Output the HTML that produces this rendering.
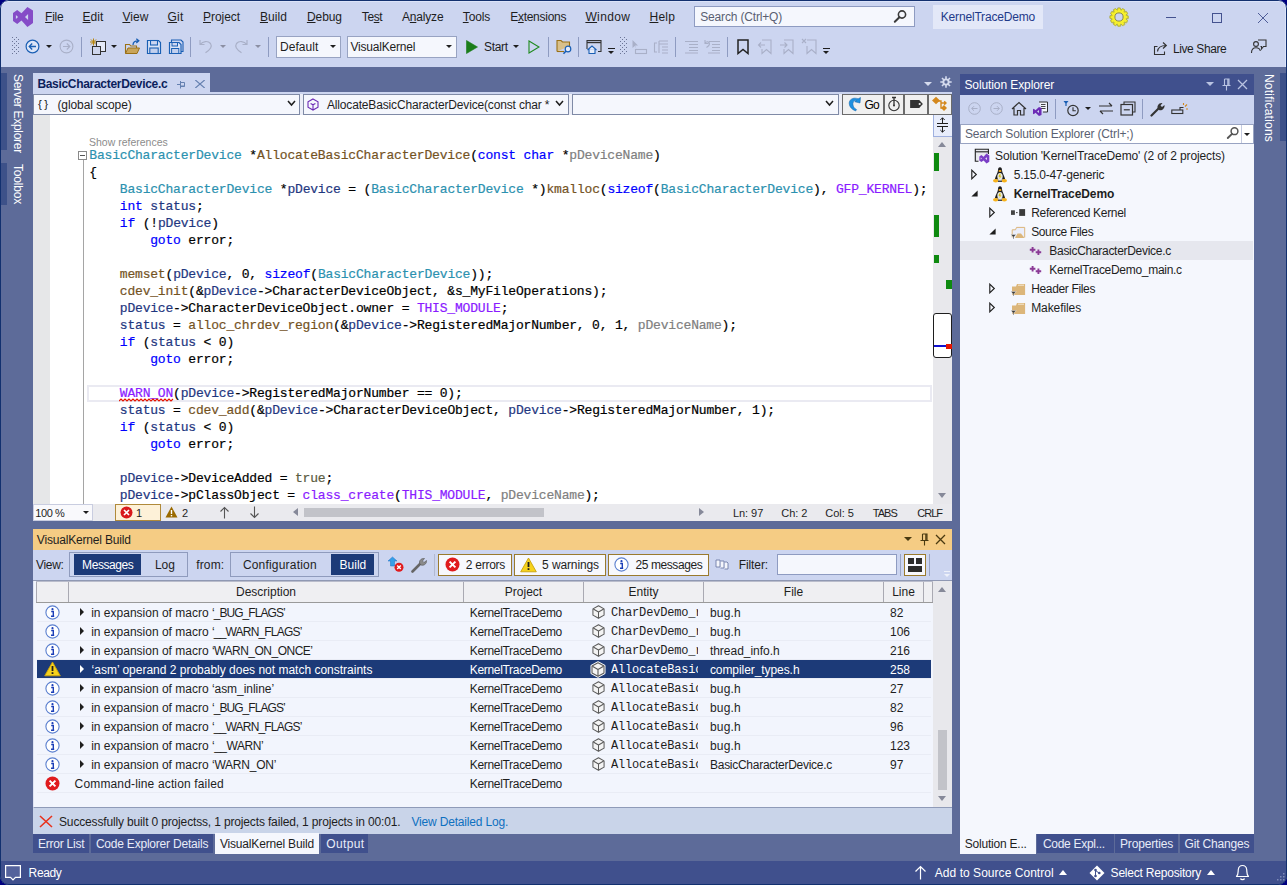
<!DOCTYPE html>
<html>
<head>
<meta charset="utf-8">
<title>KernelTraceDemo</title>
<style>
*{box-sizing:border-box;margin:0;padding:0}
html,body{width:1287px;height:885px;overflow:hidden;background:#000080}
body{font-family:"Liberation Sans",sans-serif;font-size:12px;color:#1e1e1e;position:relative}
.a{position:absolute}
.t{position:absolute;white-space:nowrap;line-height:16px;font-size:12px}
#win{position:absolute;left:0;top:0;width:1287px;height:885px;background:#5d6b99;overflow:hidden;border-radius:9px}
#top{position:absolute;left:0;top:0;width:1287px;height:67px;background:#ccd5f0}
.menu{position:absolute;top:9px;font-size:12px;line-height:16px;color:#1e1e1e;white-space:nowrap}
.menu u{text-decoration:underline;text-underline-offset:1px}
.sep{position:absolute;width:1px;background:#8e9bc1}
.combo{position:absolute;background:#f5f7fd;border:1px solid #98a3c2;font-size:13px;line-height:18px;white-space:nowrap;overflow:hidden}
.arr{position:absolute;width:0;height:0;border-left:3px solid transparent;border-right:3px solid transparent;border-top:3px solid #1e1e1e}
.code{position:absolute;left:89.3px;white-space:pre;font-family:"Liberation Mono",monospace;font-size:13px;letter-spacing:-0.184px;line-height:17px;height:17px;color:#000;-webkit-text-stroke:0.2px currentColor}
.en{color:#5c5c42}.ty{color:#2b91af}.kw{color:#0000ff}.fn{color:#74531f}.mc{color:#8a1bff}.pr{color:#808080}.lv{color:#1f377f}
.row{position:absolute;left:37px;width:894px;height:19px;border-bottom:1px solid #e9ecf5}
.row .t{top:2px;font-size:12px;line-height:17px;color:#1e1e1e}
.row.sel{background:#1c3a78}
.row.sel .t{color:#fff}
.row .mono{font-family:"Liberation Mono",monospace;font-size:12px;letter-spacing:-0.17px}
.se{position:absolute;left:0;width:293px;height:19px}
.se .t{top:2px;line-height:17px}
</style>
</head>
<body>
<div id="win">
<!-- ===== TOP (title + menu + toolbar) ===== -->
<div id="top">
  <!-- VS logo -->
  <svg class="a" style="left:13px;top:7px" width="20" height="20" viewBox="0 0 20 20">
    <path d="M14.4 0 L20 3.6 V16.1 L14.4 20 L8.5 13.6 L4.2 17 L0 14 V5.9 L4.2 3 L8.5 6.3 Z M15.1 7.1 L12 10 L15.1 12.9 Z M2.9 8 L5.1 10 L2.9 12 Z" fill="#854cc7" fill-rule="evenodd"/>
  </svg>
  <div class="menu" style="left:45.1px;letter-spacing:-0.240px"><u>F</u>ile</div>
  <div class="menu" style="left:82.6px;letter-spacing:-0.001px"><u>E</u>dit</div>
  <div class="menu" style="left:122.4px;letter-spacing:0.097px"><u>V</u>iew</div>
  <div class="menu" style="left:167.6px;letter-spacing:0.152px"><u>G</u>it</div>
  <div class="menu" style="left:203.0px;letter-spacing:-0.037px"><u>P</u>roject</div>
  <div class="menu" style="left:259.9px;letter-spacing:0.079px"><u>B</u>uild</div>
  <div class="menu" style="left:306.9px;letter-spacing:-0.055px"><u>D</u>ebug</div>
  <div class="menu" style="left:361.8px;letter-spacing:-0.383px">Te<u>s</u>t</div>
  <div class="menu" style="left:402.0px;letter-spacing:-0.188px">A<u>n</u>alyze</div>
  <div class="menu" style="left:462.8px;letter-spacing:-0.163px"><u>T</u>ools</div>
  <div class="menu" style="left:510.2px;letter-spacing:-0.272px">E<u>x</u>tensions</div>
  <div class="menu" style="left:585.4px;letter-spacing:0.369px"><u>W</u>indow</div>
  <div class="menu" style="left:649.5px;letter-spacing:0.228px"><u>H</u>elp</div>
  <!-- search -->
  <div class="a" style="left:694px;top:6px;width:221px;height:21px;background:#f5f7fd;border:1px solid #8e9bc1"></div>
  <div class="t" style="left:700.2px;top:9px;color:#5a5f72;letter-spacing:-0.164px">Search (Ctrl+Q)</div>
  <svg class="a" style="left:893px;top:9px" width="15" height="15" viewBox="0 0 15 15"><circle cx="9" cy="5.5" r="3.6" fill="none" stroke="#3b3b3b" stroke-width="1.6"/><path d="M6.4 8.2 L1.8 12.8" stroke="#3b3b3b" stroke-width="2" stroke-linecap="round"/></svg>
  <!-- solution name -->
  <div class="a" style="left:933px;top:5px;width:110px;height:24px;background:#e3e8f8"></div>
  <div class="t" style="left:940.8px;top:9px;color:#1f3a8a;letter-spacing:-0.182px">KernelTraceDemo</div>
  <!-- gear / sun icon -->
  <svg class="a" style="left:1109px;top:7px" width="20" height="20" viewBox="0 0 20 20">
    <path d="M19.12 8.81 L19.12 11.19 L16.96 11.85 L16.95 11.88 L18.50 13.53 L17.30 15.59 L15.10 15.08 L15.08 15.10 L15.59 17.30 L13.53 18.50 L11.88 16.95 L11.85 16.96 L11.19 19.12 L8.81 19.12 L8.15 16.96 L8.12 16.95 L6.47 18.50 L4.41 17.30 L4.92 15.10 L4.90 15.08 L2.70 15.59 L1.50 13.53 L3.05 11.88 L3.04 11.85 L0.88 11.19 L0.88 8.81 L3.04 8.15 L3.05 8.12 L1.50 6.47 L2.70 4.41 L4.90 4.92 L4.92 4.90 L4.41 2.70 L6.47 1.50 L8.12 3.05 L8.15 3.04 L8.81 0.88 L11.19 0.88 L11.85 3.04 L11.88 3.05 L13.53 1.50 L15.59 2.70 L15.08 4.90 L15.10 4.92 L17.30 4.41 L18.50 6.47 L16.95 8.12 L16.96 8.15 Z" fill="#f6f02c" stroke="#9a9a4a" stroke-width="0.7" stroke-linejoin="round"/>
    <path d="M19.12 8.81 L19.12 11.19 L16.96 11.85 L16.95 11.88 L18.50 13.53 L17.30 15.59 L15.10 15.08 L15.08 15.10 L15.59 17.30 L13.53 18.50 L11.88 16.95 L11.85 16.96 L11.19 19.12 L8.81 19.12 L8.15 16.96 L8.12 16.95 L6.47 18.50 L4.41 17.30 L4.92 15.10 L4.90 15.08 L2.70 15.59 L1.50 13.53 L3.05 11.88 L3.04 11.85 L0.88 11.19 L0.88 8.81 L3.04 8.15 L3.05 8.12 L1.50 6.47 L2.70 4.41 L4.90 4.92 L4.92 4.90 L4.41 2.70 L6.47 1.50 L8.12 3.05 L8.15 3.04 L8.81 0.88 L11.19 0.88 L11.85 3.04 L11.88 3.05 L13.53 1.50 L15.59 2.70 L15.08 4.90 L15.10 4.92 L17.30 4.41 L18.50 6.47 L16.95 8.12 L16.96 8.15 Z" fill="none" stroke="#c9c41a" stroke-width="0.5" transform="translate(0.4 0.5)"/>
    <circle cx="10" cy="10" r="4.1" fill="#ccd5f0" stroke="#8a8a55" stroke-width="1"/>
  </svg>
  <!-- window buttons -->
  <div class="a" style="left:1166px;top:17px;width:10px;height:1px;background:#44528f"></div>
  <div class="a" style="left:1212px;top:13px;width:10px;height:10px;border:1px solid #44528f"></div>
  <svg class="a" style="left:1258px;top:13px" width="10" height="10" viewBox="0 0 10 10"><path d="M0 0 L10 10 M10 0 L0 10" stroke="#4f5d98" stroke-width="1"/></svg>
</div>
<!-- ===== TOOLBAR ICONS ===== -->
<div id="tb" class="a" style="left:0;top:0;width:1287px;height:67px">
  <!-- grip -->
  <svg class="a" style="left:12px;top:37px" width="7" height="19" viewBox="0 0 7 19"><g fill="#6b7496"><rect x="0" y="0" width="1" height="1"/><rect x="4" y="0" width="1" height="1"/><rect x="2" y="2" width="1" height="1"/><rect x="6" y="2" width="1" height="1"/><rect x="0" y="4" width="1" height="1"/><rect x="4" y="4" width="1" height="1"/><rect x="2" y="6" width="1" height="1"/><rect x="6" y="6" width="1" height="1"/><rect x="0" y="8" width="1" height="1"/><rect x="4" y="8" width="1" height="1"/><rect x="2" y="10" width="1" height="1"/><rect x="6" y="10" width="1" height="1"/><rect x="0" y="12" width="1" height="1"/><rect x="4" y="12" width="1" height="1"/><rect x="2" y="14" width="1" height="1"/><rect x="6" y="14" width="1" height="1"/><rect x="0" y="16" width="1" height="1"/><rect x="4" y="16" width="1" height="1"/></g></svg>
  <!-- back -->
  <svg class="a" style="left:25px;top:39px" width="15" height="15" viewBox="0 0 15 15"><circle cx="7.5" cy="7.5" r="6.4" fill="#dbe4f7" stroke="#1a5fb4" stroke-width="1.2"/><path d="M11 7.5 H4.4 M7.2 4.5 L4.2 7.5 L7.2 10.5" fill="none" stroke="#1a5fb4" stroke-width="1.3"/></svg>
  <div class="arr" style="left:46px;top:45px"></div>
  <!-- forward (disabled) -->
  <svg class="a" style="left:59px;top:39px" width="15" height="15" viewBox="0 0 15 15"><circle cx="7.5" cy="7.5" r="6.4" fill="none" stroke="#a9b0c8" stroke-width="1.1"/><path d="M4 7.5 H10.6 M7.8 4.5 L10.8 7.5 L7.8 10.5" fill="none" stroke="#a9b0c8" stroke-width="1.2"/></svg>
  <div class="sep" style="left:81px;top:37px;height:20px"></div>
  <!-- new project -->
  <svg class="a" style="left:89px;top:38px" width="18" height="17" viewBox="0 0 18 17"><path d="M4.5 0.5 V7.5 M1 4 H8 M2 1.5 L7 6.5 M7 1.5 L2 6.5" stroke="#b8860b" stroke-width="1"/><rect x="7.5" y="3.5" width="9" height="10" fill="#e4e9f7" stroke="#333" stroke-width="1"/><rect x="3.5" y="8.5" width="8" height="8" fill="#cfd6ec" stroke="#333" stroke-width="1"/></svg>
  <div class="arr" style="left:111px;top:45px"></div>
  <!-- open folder -->
  <svg class="a" style="left:124px;top:38px" width="17" height="17" viewBox="0 0 17 17"><path d="M1.5 15.5 V6.5 H5.5 L6.8 8 H12.5 V10" fill="none" stroke="#9a7016" stroke-width="1.1"/><path d="M1.5 15.5 L4 10 H15.5 L13 15.5 Z" fill="#c9a55a" stroke="#9a7016" stroke-width="1"/><path d="M9 7 C9 4 11 2.6 14.5 2.8 M12.3 0.7 L14.8 2.8 L12.3 5" fill="none" stroke="#1a5fb4" stroke-width="1.3"/></svg>
  <!-- save -->
  <svg class="a" style="left:146px;top:39px" width="16" height="16" viewBox="0 0 16 16"><path d="M1.5 1.5 H12.5 L14.5 3.5 V14.5 H1.5 Z" fill="#dbe4f7" stroke="#1a5fb4" stroke-width="1.2"/><rect x="4.5" y="1.5" width="7" height="4.5" fill="#ccd5f0" stroke="#1a5fb4" stroke-width="1.1"/><rect x="3.8" y="9" width="8.4" height="5.5" fill="#c3d0ee" stroke="#1a5fb4" stroke-width="1.1"/></svg>
  <!-- save all -->
  <svg class="a" style="left:168px;top:39px" width="16" height="16" viewBox="0 0 16 16"><path d="M3.5 3 V1 H13 L15 3 V12.5 H13" fill="none" stroke="#1a5fb4" stroke-width="1.1"/><path d="M1.5 3.5 H11 L13 5.5 V14.5 H1.5 Z" fill="#dbe4f7" stroke="#1a5fb4" stroke-width="1.2"/><rect x="4" y="3.5" width="5.5" height="3.5" fill="#ccd5f0" stroke="#1a5fb4" stroke-width="1"/><rect x="3.6" y="9.5" width="7.2" height="5" fill="#c3d0ee" stroke="#1a5fb4" stroke-width="1"/></svg>
  <div class="sep" style="left:190px;top:37px;height:20px"></div>
  <!-- undo / redo disabled -->
  <svg class="a" style="left:199px;top:39px" width="14" height="15" viewBox="0 0 14 15"><path d="M1 1 V5.5 H5.5 M1.2 5.3 C4 2 9 1.5 11.5 4.5 C13.5 7.5 11.5 10.5 6.5 13.8" fill="none" stroke="#a9b0c8" stroke-width="1.2"/></svg>
  <div class="arr" style="left:220px;top:45px;border-top-color:#8b8fa3"></div>
  <svg class="a" style="left:234px;top:39px" width="14" height="15" viewBox="0 0 14 15"><path d="M13 1 V5.5 H8.5 M12.8 5.3 C10 2 5 1.5 2.5 4.5 C0.5 7.5 2.5 10.5 7.5 13.8" fill="none" stroke="#a9b0c8" stroke-width="1.2"/></svg>
  <div class="arr" style="left:255px;top:45px;border-top-color:#8b8fa3"></div>
  <div class="sep" style="left:268px;top:37px;height:20px"></div>
  <!-- combos -->
  <div class="combo" style="left:276px;top:36px;width:65px;height:22px"></div>
  <div class="t" style="left:280.1px;top:39px;letter-spacing:0.024px">Default</div>
  <div class="arr" style="left:330px;top:45px"></div>
  <div class="combo" style="left:347px;top:36px;width:110px;height:22px"></div>
  <div class="t" style="left:350.4px;top:39px;letter-spacing:-0.196px">VisualKernel</div>
  <div class="arr" style="left:446px;top:45px"></div>
  <!-- start -->
  <svg class="a" style="left:466px;top:40px" width="12" height="14" viewBox="0 0 12 14"><path d="M0.5 0.5 L11.5 7 L0.5 13.5 Z" fill="#1a7d1a" stroke="#1a7d1a" stroke-width="0.6"/></svg>
  <div class="t" style="left:484.1px;top:39px;letter-spacing:-0.329px">Start</div>
  <div class="arr" style="left:513px;top:45px"></div>
  <svg class="a" style="left:528px;top:40px" width="12" height="14" viewBox="0 0 12 14"><path d="M1 1 L11 7 L1 13 Z" fill="none" stroke="#1e8a1e" stroke-width="1.1"/></svg>
  <div class="sep" style="left:548px;top:37px;height:20px"></div>
  <!-- folder search -->
  <svg class="a" style="left:556px;top:39px" width="17" height="16" viewBox="0 0 17 16"><path d="M1 12.5 V1.5 H5 L6.5 3 H13.5 V7" fill="#d9c08a" stroke="#9a7016" stroke-width="1.1"/><path d="M1 12.5 H8" stroke="#9a7016" stroke-width="1.1"/><circle cx="12" cy="10" r="2.8" fill="#e6ecfa" stroke="#1a5fb4" stroke-width="1.2"/><path d="M10 12 L7.5 14.8" stroke="#1a5fb4" stroke-width="1.6"/></svg>
  <div class="sep" style="left:578px;top:37px;height:20px"></div>
  <!-- window/home -->
  <svg class="a" style="left:586px;top:39px" width="16" height="16" viewBox="0 0 16 16"><path d="M1 10 V1.5 H15 V12.5 H12" fill="none" stroke="#333" stroke-width="1.1"/><path d="M1 3.5 H15" stroke="#333" stroke-width="1.4"/><path d="M1.5 11 L6 7 L10.5 11 M3 10 V14.5 H9 V10" fill="#e6ecfa" stroke="#1a5fb4" stroke-width="1.1"/></svg>
  <div class="a" style="left:608px;top:48px;width:7px;height:1px;background:#1e1e1e"></div>
  <div class="arr" style="left:608px;top:51px;border-top-width:3.5px"></div>
  <!-- grip 2 -->
  <svg class="a" style="left:620px;top:37px" width="7" height="19" viewBox="0 0 7 19"><g fill="#6b7496"><rect x="0" y="0" width="1" height="1"/><rect x="4" y="0" width="1" height="1"/><rect x="2" y="2" width="1" height="1"/><rect x="6" y="2" width="1" height="1"/><rect x="0" y="4" width="1" height="1"/><rect x="4" y="4" width="1" height="1"/><rect x="2" y="6" width="1" height="1"/><rect x="6" y="6" width="1" height="1"/><rect x="0" y="8" width="1" height="1"/><rect x="4" y="8" width="1" height="1"/><rect x="2" y="10" width="1" height="1"/><rect x="6" y="10" width="1" height="1"/><rect x="0" y="12" width="1" height="1"/><rect x="4" y="12" width="1" height="1"/><rect x="2" y="14" width="1" height="1"/><rect x="6" y="14" width="1" height="1"/><rect x="0" y="16" width="1" height="1"/><rect x="4" y="16" width="1" height="1"/></g></svg>
  <!-- disabled icons -->
  <svg class="a" style="left:631px;top:39px" width="17" height="16" viewBox="0 0 17 16"><path d="M1.5 1 L1.5 9 L3.8 7 L5.5 10 L4 6.5 L7 6.5 Z" fill="#a9b0c8"/><rect x="4.5" y="10.5" width="11" height="4" fill="none" stroke="#a9b0c8" stroke-width="1.1"/></svg>
  <svg class="a" style="left:653px;top:39px" width="16" height="16" viewBox="0 0 16 16"><path d="M4 4 H1.5 V13 H4" fill="none" stroke="#a9b0c8" stroke-width="1.1"/><path d="M6 2 H15 M6 5 H15 M9 8 H15 M9 11 H15 M9 14 H15 M6 2 V14" stroke="#a9b0c8" stroke-width="1.1" fill="none"/></svg>
  <div class="sep" style="left:675px;top:37px;height:20px"></div>
  <svg class="a" style="left:684px;top:40px" width="15" height="14" viewBox="0 0 15 14"><path d="M1 1.5 H14 M5 4.5 H14 M5 7.5 H14 M5 10.5 H14 M1 13 H14" stroke="#a9b0c8" stroke-width="1.1"/></svg>
  <svg class="a" style="left:704px;top:39px" width="17" height="15" viewBox="0 0 17 15"><path d="M5 2.5 H16 M8 5.5 H16 M8 8.5 H16 M8 11.5 H16 M4 14 H16" stroke="#a9b0c8" stroke-width="1.1"/><path d="M1 1 V4.5 H4.5 M1.2 4.3 C2.5 2 5.5 2.5 5.5 5 C5.5 6.5 4 7.5 2.5 8.5" fill="none" stroke="#a9b0c8" stroke-width="1.1"/></svg>
  <div class="sep" style="left:727px;top:37px;height:20px"></div>
  <!-- bookmarks -->
  <svg class="a" style="left:737px;top:39px" width="12" height="16" viewBox="0 0 12 16"><path d="M1 1 H11 V14.5 L6 10.5 L1 14.5 Z" fill="none" stroke="#222" stroke-width="1.5"/></svg>
  <svg class="a" style="left:757px;top:39px" width="15" height="16" viewBox="0 0 15 16"><path d="M5 1 H14 V14.5 L9.5 10.5 L5 14.5 V10" fill="none" stroke="#a9b0c8" stroke-width="1.1"/><path d="M8 6 H1.5 M4 3.5 L1.5 6 L4 8.5" fill="none" stroke="#a9b0c8" stroke-width="1.1"/></svg>
  <svg class="a" style="left:779px;top:39px" width="15" height="16" viewBox="0 0 15 16"><path d="M5 1 H14 V14.5 L9.5 10.5 L5 14.5 V10" fill="none" stroke="#a9b0c8" stroke-width="1.1"/><path d="M1 6 H8 M5.5 3.5 L8 6 L5.5 8.5" fill="none" stroke="#a9b0c8" stroke-width="1.1"/></svg>
  <svg class="a" style="left:801px;top:38px" width="16" height="17" viewBox="0 0 16 17"><path d="M6 2 H15 V15.5 L10.5 11.5 L6 15.5 V8" fill="none" stroke="#a9b0c8" stroke-width="1.1"/><path d="M1 1 L5 5 M5 1 L1 5" stroke="#a9b0c8" stroke-width="1.1"/></svg>
  <div class="a" style="left:823px;top:48px;width:7px;height:1px;background:#1e1e1e"></div>
  <div class="arr" style="left:823px;top:51px;border-top-width:3.5px"></div>
  <!-- live share -->
  <svg class="a" style="left:1153px;top:41px" width="15" height="15" viewBox="0 0 15 15"><path d="M4.5 5.5 H1.5 V13.5 H11.5 V10.5" fill="none" stroke="#333" stroke-width="1.1"/><path d="M4.5 10.5 C5 6.5 8 4.5 13 4.5 M10 1.5 L13.3 4.5 L10 7.5" fill="none" stroke="#333" stroke-width="1.2"/></svg>
  <div class="t" style="left:1173.0px;top:41px;letter-spacing:-0.408px">Live Share</div>
  <svg class="a" style="left:1250px;top:39px" width="17" height="16" viewBox="0 0 17 16"><circle cx="6" cy="5" r="2.4" fill="none" stroke="#333" stroke-width="1.1"/><path d="M1.5 14 C1.5 10 3.5 8.8 6 8.8 C8.5 8.8 10 10 10.3 12" fill="none" stroke="#333" stroke-width="1.1"/><path d="M8 1 H16 V7.5 H13.5 L11.5 10 V7.5 H10.5" fill="#ccd5f0" stroke="#333" stroke-width="1.1"/></svg>
</div>

<!-- TOOLBAR-ICONS-END -->
<!-- ===== LEFT STRIP ===== -->
<div class="a" style="left:1px;top:67px;width:6px;height:794px;background:#5d6b99"></div>
<div class="a" style="left:1px;top:73px;width:6px;height:77px;background:#3d5189"></div>
<div class="a" style="left:1px;top:163px;width:6px;height:42px;background:#3d5189"></div>
<div class="t" style="left:26px;top:73.5px;color:#fff;transform-origin:0 0;transform:rotate(90deg);font-size:12px;line-height:16px;letter-spacing:-0.3px">Server Explorer</div>
<div class="t" style="left:26px;top:164px;color:#fff;transform-origin:0 0;transform:rotate(90deg);font-size:12px;line-height:16px;letter-spacing:-0.2px">Toolbox</div>
<!-- ===== DOCUMENT WELL ===== -->
<div class="a" style="left:33px;top:73px;width:177px;height:21px;background:#ccd5f0"></div>
<div class="a" style="left:33px;top:92px;width:919px;height:2px;background:#ccd5f0"></div>
<div class="t" style="left:37.4px;top:76px;font-weight:bold;color:#0c1f5c;letter-spacing:-0.308px">BasicCharacterDevice.c</div>
<svg class="a" style="left:176px;top:80px" width="10" height="9" viewBox="0 0 10 9"><path d="M1 4.5 H4.5 M4.5 1 V8.5 M4.5 2.5 H8.5 V6.5 H4.5 M4.5 6 H8.5" fill="none" stroke="#6580b0" stroke-width="1"/></svg>
<svg class="a" style="left:195px;top:80px" width="10" height="8" viewBox="0 0 10 8"><path d="M0.3 0 L9.7 8 M9.7 0 L0.3 8" stroke="#6580b0" stroke-width="1.2"/></svg>
<div class="arr" style="left:924px;top:82px;border-top-color:#d5dbee;border-left-width:4px;border-right-width:4px;border-top-width:4.5px"></div>
<svg class="a" style="left:940px;top:76px" width="12" height="12" viewBox="0 0 12 12"><g stroke="#d5dbee" stroke-width="1.6"><path d="M6 0.3 V11.7 M0.3 6 H11.7 M2 2 L10 10 M10 2 L2 10"/></g><circle cx="6" cy="6" r="3.6" fill="#d5dbee"/><circle cx="6" cy="6" r="1.7" fill="#5d6b99"/></svg>
<!-- nav bar -->
<div class="a" style="left:33px;top:94px;width:919px;height:21px;background:#eceef7"></div>
<div class="combo" style="left:33px;top:94px;width:267px;height:21px;border-color:#7f8aa6"></div>
<div class="combo" style="left:303px;top:94px;width:266px;height:21px;border-color:#7f8aa6"></div>
<div class="combo" style="left:572px;top:94px;width:267px;height:21px;border-color:#7f8aa6"></div>
<div class="t" style="left:38px;top:96px;font-size:11.5px;letter-spacing:2.5px;color:#222">{}</div>
<div class="t" style="left:57.4px;top:97px;letter-spacing:-0.077px">(global scope)</div>
<svg class="a" style="left:287px;top:100px" width="9" height="7" viewBox="0 0 9 7"><path d="M1 1 L4.5 5 L8 1" fill="none" stroke="#1e1e1e" stroke-width="1.5"/></svg>
<svg class="a" style="left:307px;top:98px" width="12" height="13" viewBox="0 0 12 13"><path d="M6 1 L11 3.8 V9.2 L6 12 L1 9.2 V3.8 Z M6 12 V6.8 M6 6.8 L3.6 5.4 M6 6.8 L8.4 5.4" fill="none" stroke="#6c2bb5" stroke-width="1.1"/></svg>
<div class="t" style="left:326.9px;top:97px;letter-spacing:-0.153px">AllocateBasicCharacterDevice(const char *</div>
<svg class="a" style="left:555px;top:100px" width="9" height="7" viewBox="0 0 9 7"><path d="M1 1 L4.5 5 L8 1" fill="none" stroke="#1e1e1e" stroke-width="1.5"/></svg>
<svg class="a" style="left:825px;top:100px" width="9" height="7" viewBox="0 0 9 7"><path d="M1 1 L4.5 5 L8 1" fill="none" stroke="#1e1e1e" stroke-width="1.5"/></svg>
<!-- nav buttons -->
<div class="a" style="left:842px;top:94px;width:110px;height:21px;background:#f0f0f0;border:1px solid #6b6b6b"></div>
<div class="a" style="left:883px;top:94px;width:2px;height:21px;background:#6b6b6b"></div>
<div class="a" style="left:903px;top:94px;width:2px;height:21px;background:#6b6b6b"></div>
<div class="a" style="left:927px;top:94px;width:2px;height:21px;background:#6b6b6b"></div>
<svg class="a" style="left:848px;top:96px" width="14" height="16" viewBox="0 0 14 16"><path d="M12.5 1.5 L12 7 L6.8 5.8 L8.6 4.6 C6 4.2 4.4 6.4 5 9 C5.4 11 6.8 12.6 8.6 13.6 L7.6 15 C4 13.6 1.4 11 1.2 7.6 C1 3.6 5 0.8 10.2 2.8 Z" fill="#1e90e0" stroke="#1462a8" stroke-width="0.5"/></svg>
<div class="t" style="left:864.4px;top:97px;color:#000;letter-spacing:-0.608px">Go</div>
<svg class="a" style="left:887px;top:96px" width="14" height="16" viewBox="0 0 14 16"><circle cx="7" cy="9.5" r="5.2" fill="none" stroke="#333" stroke-width="1.1"/><path d="M5 1.5 H9 M7 1.5 V9.5" stroke="#333" stroke-width="1.3"/><circle cx="7" cy="9.5" r="1" fill="#333"/></svg>
<svg class="a" style="left:909px;top:99px" width="15" height="10" viewBox="0 0 16 11"><path d="M1 1 H11 L15 5.5 L11 10 H1 Z" fill="#333"/><circle cx="11.5" cy="5.5" r="1.2" fill="#f0f0f0"/></svg>
<svg class="a" style="left:931px;top:96px" width="18" height="17" viewBox="0 0 18 17"><path d="M5 0.8 L9 4.5 L5 8.2 L1 4.5 Z" fill="#d4881c"/><path d="M13 9 L16 12 L13 15 L10 12 Z" fill="#d4881c"/><path d="M6 5 H10 V12 H13 M10 7 H15 M13.2 5.2 L15 7 L13.2 8.8" fill="none" stroke="#d4881c" stroke-width="1.4"/></svg>
<!-- ===== EDITOR ===== -->
<div id="ed" class="a" style="left:33px;top:115px;width:919px;height:389px;background:#fff;overflow:hidden">
  <div class="a" style="left:0;top:0;width:17px;height:389px;background:#e6e7e8"></div>
</div>
<!-- outlining -->
<div class="a" style="left:78px;top:151px;width:9px;height:9px;border:1px solid #8a8a8a;background:#fff"></div>
<div class="a" style="left:80px;top:155px;width:5px;height:1px;background:#555"></div>
<div class="a" style="left:83px;top:160px;width:1px;height:344px;background:#a5a5a5"></div>
<div class="t" style="left:89px;top:136px;font-size:10.5px;line-height:13px;color:#8c8c8c">Show references</div>
<!-- current line -->
<div class="a" style="left:87px;top:385px;width:845px;height:17px;border:2px solid #eaeaf2;background:#fff"></div>
<div class="code" style="top:147px"><span class="ty">BasicCharacterDevice</span> *<span class="fn">AllocateBasicCharacterDevice</span>(<span class="kw">const</span> <span class="kw">char</span> *<span class="pr">pDeviceName</span>)</div>
<div class="code" style="top:164px">{</div>
<div class="code" style="top:181px">    <span class="ty">BasicCharacterDevice</span> *<span class="lv">pDevice</span> = (<span class="ty">BasicCharacterDevice</span> *)<span class="fn">kmalloc</span>(<span class="kw">sizeof</span>(<span class="ty">BasicCharacterDevice</span>), <span class="mc">GFP_KERNEL</span>);</div>
<div class="code" style="top:198px">    <span class="kw">int</span> <span class="lv">status</span>;</div>
<div class="code" style="top:215px">    <span class="kw">if</span> (!<span class="lv">pDevice</span>)</div>
<div class="code" style="top:232px">        <span class="kw">goto</span> error;</div>
<div class="code" style="top:266px">    <span class="fn">memset</span>(<span class="lv">pDevice</span>, 0, <span class="kw">sizeof</span>(<span class="ty">BasicCharacterDevice</span>));</div>
<div class="code" style="top:283px">    <span class="fn">cdev_init</span>(&amp;<span class="lv">pDevice</span>-&gt;CharacterDeviceObject, &amp;s_MyFileOperations);</div>
<div class="code" style="top:300px">    <span class="lv">pDevice</span>-&gt;CharacterDeviceObject.owner = <span class="mc">THIS_MODULE</span>;</div>
<div class="code" style="top:317px">    <span class="lv">status</span> = <span class="fn">alloc_chrdev_region</span>(&amp;<span class="lv">pDevice</span>-&gt;RegisteredMajorNumber, 0, 1, <span class="pr">pDeviceName</span>);</div>
<div class="code" style="top:334px">    <span class="kw">if</span> (<span class="lv">status</span> &lt; 0)</div>
<div class="code" style="top:351px">        <span class="kw">goto</span> error;</div>
<div class="code" style="top:385px">    <span class="mc sq">WARN_ON</span>(<span class="lv">pDevice</span>-&gt;RegisteredMajorNumber == 0);</div>
<div class="code" style="top:402px">    <span class="lv">status</span> = <span class="fn">cdev_add</span>(&amp;<span class="lv">pDevice</span>-&gt;CharacterDeviceObject, <span class="lv">pDevice</span>-&gt;RegisteredMajorNumber, 1);</div>
<div class="code" style="top:419px">    <span class="kw">if</span> (<span class="lv">status</span> &lt; 0)</div>
<div class="code" style="top:436px">        <span class="kw">goto</span> error;</div>
<div class="code" style="top:470px">    <span class="lv">pDevice</span>-&gt;DeviceAdded = <span class="en">true</span>;</div>
<div class="code" style="top:487px">    <span class="lv">pDevice</span>-&gt;pClassObject = <span class="mc">class_create</span>(<span class="mc">THIS_MODULE</span>, <span class="pr">pDeviceName</span>);</div>

<!-- squiggle -->
<svg class="a" style="left:119px;top:398px" width="55" height="4" viewBox="0 0 55 4"><path d="M0 3 L2 1 L4 3 L6 1 L8 3 L10 1 L12 3 L14 1 L16 3 L18 1 L20 3 L22 1 L24 3 L26 1 L28 3 L30 1 L32 3 L34 1 L36 3 L38 1 L40 3 L42 1 L44 3 L46 1 L48 3 L50 1 L52 3 L54 1" fill="none" stroke="#e51400" stroke-width="1.1"/></svg>
<!-- vertical scrollbar -->
<div class="a" style="left:933px;top:115px;width:19px;height:389px;background:#e8e8ec"></div>
<div class="a" style="left:933px;top:115px;width:19px;height:22px;background:#e8edfb;border-left:1px solid #9fb0df;border-bottom:1px solid #9fb0df"></div>
<svg class="a" style="left:936px;top:117px" width="13" height="16" viewBox="0 0 13 16"><path d="M1 6.5 H12 M1 9.5 H12 M6.5 0.8 V6 M6.5 10 V15.2 M4.3 3 L6.5 0.8 L8.7 3 M4.3 13 L6.5 15.2 L8.7 13" fill="none" stroke="#1e1e1e" stroke-width="1"/></svg>
<div class="a" style="left:938px;top:142px;width:0;height:0;border-left:4.5px solid transparent;border-right:4.5px solid transparent;border-bottom:5px solid #868999"></div>
<div class="a" style="left:938px;top:493px;width:0;height:0;border-left:4.5px solid transparent;border-right:4.5px solid transparent;border-top:5px solid #868999"></div>
<div class="a" style="left:934px;top:153px;width:5px;height:18px;background:#0f8a10"></div>
<div class="a" style="left:934px;top:215px;width:5px;height:22px;background:#0f8a10"></div>
<div class="a" style="left:934px;top:255px;width:5px;height:8px;background:#0f8a10"></div>
<div class="a" style="left:946px;top:280px;width:6px;height:9px;background:#0f8a10"></div>
<div class="a" style="left:933px;top:313px;width:19px;height:45px;background:#fff;border:1px solid #1e1e1e;border-radius:3px"></div>
<div class="a" style="left:934px;top:345px;width:17px;height:2px;background:#1010d0"></div>
<div class="a" style="left:946px;top:344px;width:6px;height:5px;background:#e51400"></div>
<!-- editor bottom status row -->
<div class="a" style="left:33px;top:504px;width:919px;height:17px;background:#eaeaee"></div>
<div class="a" style="left:33px;top:504px;width:60px;height:17px;background:#f9f9fc;border:1px solid #c9cde0"></div>
<div class="t" style="left:35.3px;top:506px;line-height:15px;font-size:11px;letter-spacing:-0.401px">100 %</div>
<div class="arr" style="left:83px;top:511px"></div>
<div class="a" style="left:115px;top:504px;width:46px;height:17px;background:#fdf1d8;border:1px solid #b08a3a"></div>
<svg class="a" style="left:120px;top:506px" width="13" height="13" viewBox="0 0 13 13"><circle cx="6.5" cy="6.5" r="6" fill="#d8191c"/><path d="M4 4 L9 9 M9 4 L4 9" stroke="#fff" stroke-width="1.7"/></svg>
<div class="t" style="left:136px;top:506px;line-height:15px;font-size:11px">1</div>
<svg class="a" style="left:165px;top:506px" width="13" height="12" viewBox="0 0 13 12"><path d="M6.5 0.5 L12.5 11.5 H0.5 Z" fill="#9a6a00"/><path d="M6.5 4 V8" stroke="#fff" stroke-width="1.4"/><rect x="5.8" y="9" width="1.4" height="1.4" fill="#fff"/></svg>
<div class="t" style="left:182px;top:506px;line-height:15px;font-size:11px">2</div>
<svg class="a" style="left:219px;top:506px" width="11" height="13" viewBox="0 0 11 13"><path d="M5.5 12.5 V1.5 M1.5 5.5 L5.5 1.5 L9.5 5.5" fill="none" stroke="#555" stroke-width="1.1"/></svg>
<svg class="a" style="left:249px;top:506px" width="11" height="13" viewBox="0 0 11 13"><path d="M5.5 0.5 V11.5 M1.5 7.5 L5.5 11.5 L9.5 7.5" fill="none" stroke="#555" stroke-width="1.1"/></svg>
<div class="a" style="left:293px;top:508px;width:0;height:0;border-top:4.5px solid transparent;border-bottom:4.5px solid transparent;border-right:5px solid #868999"></div>
<div class="a" style="left:304px;top:508px;width:240px;height:9px;background:#c2c3c9"></div>
<div class="a" style="left:699px;top:508px;width:0;height:0;border-top:4.5px solid transparent;border-bottom:4.5px solid transparent;border-left:5px solid #868999"></div>
<div class="t" style="left:733.0px;top:506px;line-height:15px;font-size:11px;letter-spacing:-0.066px">Ln: 97</div>
<div class="t" style="left:781.3px;top:506px;line-height:15px;font-size:11px;letter-spacing:-0.079px">Ch: 2</div>
<div class="t" style="left:825.3px;top:506px;line-height:15px;font-size:11px;letter-spacing:-0.008px">Col: 5</div>
<div class="t" style="left:872.7px;top:506px;line-height:15px;font-size:11px;letter-spacing:-0.905px">TABS</div>
<div class="t" style="left:917.2px;top:506px;line-height:15px;font-size:11px;letter-spacing:-0.959px">CRLF</div>
<!-- EDITOR-CONTENT-END -->

<!-- DOC-END -->
<!-- ===== BUILD PANEL ===== -->
<div class="a" style="left:33px;top:529px;width:919px;height:21px;background:#f5cc84"></div>
<div class="t" style="left:36.8px;top:532px;color:#1e1e1e;letter-spacing:-0.182px">VisualKernel Build</div>
<div class="arr" style="left:904px;top:537px;border-left-width:4px;border-right-width:4px;border-top-width:4.5px;border-top-color:#4a3a10"></div>
<svg class="a" style="left:919px;top:533px" width="11" height="13" viewBox="0 0 11 13"><path d="M3.5 1 H8 V7 M3.5 1 V7 M6.8 1 V7 M1.5 7.5 H9.5 M5.5 7.5 V12.5" fill="none" stroke="#4a3a10" stroke-width="1.1"/></svg>
<svg class="a" style="left:935px;top:534px" width="11" height="11" viewBox="0 0 11 11"><path d="M1 1 L10 10 M10 1 L1 10" stroke="#4a3a10" stroke-width="1.3"/></svg>
<div class="a" style="left:33px;top:550px;width:919px;height:31px;background:#ccd5f0"></div>
<div class="t" style="left:36.0px;top:557px;letter-spacing:-0.308px">View:</div>
<div class="a" style="left:69px;top:552px;width:119px;height:25px;border:1px solid #8f9bbd;background:#ccd5f0"></div>
<div class="a" style="left:74px;top:554px;width:67px;height:21px;background:#1c3a78"></div>
<div class="t" style="left:82.1px;top:557px;color:#fff;letter-spacing:-0.438px">Messages</div>
<div class="t" style="left:155.1px;top:557px;letter-spacing:-0.144px">Log</div>
<div class="t" style="left:196.2px;top:557px;letter-spacing:0.171px">from:</div>
<div class="a" style="left:230px;top:552px;width:149px;height:25px;border:1px solid #8f9bbd;background:#ccd5f0"></div>
<div class="a" style="left:331px;top:554px;width:43px;height:21px;background:#1c3a78"></div>
<div class="t" style="left:242.9px;top:557px;letter-spacing:0.193px">Configuration</div>
<div class="t" style="left:339.5px;top:557px;color:#fff;letter-spacing:0.023px">Build</div>
<!-- small icons -->
<svg class="a" style="left:387px;top:556px" width="17" height="17" viewBox="0 0 17 17"><path d="M5.5 1 L10 5 H7.5 V10 H3.5 V5 H1 Z" fill="#359fe8" stroke="#1a6fc4" stroke-width="0.5"/><circle cx="12" cy="11.2" r="4.5" fill="#e01b1e"/><path d="M10.2 9.4 L13.8 13 M13.8 9.4 L10.2 13" stroke="#fff" stroke-width="1.4"/></svg>
<svg class="a" style="left:411px;top:556px" width="18" height="17" viewBox="0 0 18 17"><path d="M1.5 15.5 L9.5 7.5" stroke="#666" stroke-width="2.6" stroke-linecap="round"/><path d="M9 8 C7.5 5.5 9.5 2 13.5 2.5 L11.5 5 L13 6.5 L15.5 4.5 C16 8 12.5 10 10 9 Z" fill="#8a8a8a" stroke="#555" stroke-width="0.6"/></svg>
<div class="sep" style="left:434px;top:554px;height:22px;background:#b3bad0"></div>
<!-- counters -->
<div class="a" style="left:438px;top:554px;width:74px;height:22px;background:#f7f8fd;border:1px solid #9a7a2e"></div>
<svg class="a" style="left:445px;top:557px" width="15" height="15" viewBox="0 0 15 15"><circle cx="7.5" cy="7.5" r="7" fill="#e01b1e"/><path d="M4.6 4.6 L10.4 10.4 M10.4 4.6 L4.6 10.4" stroke="#fff" stroke-width="2"/></svg>
<div class="t" style="left:465.8px;top:557px;letter-spacing:-0.255px">2 errors</div>
<div class="a" style="left:514px;top:554px;width:92px;height:22px;background:#f7f8fd;border:1px solid #9a7a2e"></div>
<svg class="a" style="left:520px;top:557px" width="17" height="16" viewBox="0 0 17 16"><path d="M8.5 1 L16.3 14.8 H0.7 Z" fill="#f6d21c" stroke="#c9a30a" stroke-width="0.9" stroke-linejoin="round"/><path d="M8.5 5 V10" stroke="#1e1e1e" stroke-width="1.8"/><rect x="7.6" y="11.2" width="1.8" height="1.8" fill="#1e1e1e"/></svg>
<div class="t" style="left:542.1px;top:557px;letter-spacing:-0.113px">5 warnings</div>
<div class="a" style="left:608px;top:554px;width:101px;height:22px;background:#f7f8fd;border:1px solid #9a7a2e"></div>
<svg class="a" style="left:614px;top:557px" width="15" height="15" viewBox="0 0 15 15"><circle cx="7.5" cy="7.5" r="6.6" fill="#fff" stroke="#5a7fcf" stroke-width="1.1"/><circle cx="7.5" cy="4.2" r="1.1" fill="#1c3fb8"/><path d="M6.2 6.5 H8.3 V11.6 M6 11.3 H9.2" fill="none" stroke="#1c3fb8" stroke-width="1.4"/></svg>
<div class="t" style="left:635.6px;top:557px;letter-spacing:-0.434px">25 messages</div>
<svg class="a" style="left:715px;top:559px" width="14" height="11" viewBox="0 0 14 11"><path d="M1 1 H5 V8 H1 Z M5.5 2 H9 V9 H5.5 M9.5 3 H12 L13 4 V10 H9.5" fill="#f4f6fc" stroke="#6f7da8" stroke-width="0.9"/></svg>
<div class="t" style="left:738.8px;top:557px;letter-spacing:-0.114px">Filter:</div>
<div class="a" style="left:777px;top:554px;width:120px;height:21px;background:#f5f7fd;border:1px solid #8e9bc1"></div>
<div class="sep" style="left:900px;top:554px;height:22px;background:#9aa5c6"></div>
<div class="a" style="left:904px;top:554px;width:22px;height:22px;background:#f7f8fd;border:1px solid #9a7a2e"></div>
<div class="a" style="left:908px;top:558px;width:6px;height:6px;background:#2b2b2b"></div>
<div class="a" style="left:916px;top:558px;width:6px;height:6px;background:#2b2b2b"></div>
<div class="a" style="left:908px;top:566px;width:14px;height:6px;background:#2b2b2b"></div>
<div class="sep" style="left:929px;top:554px;height:22px;background:#9aa5c6"></div>
<div class="a" style="left:944px;top:571px;width:6px;height:1px;background:#eef1fa"></div>
<div class="arr" style="left:944px;top:574px;border-top-width:3.5px;border-top-color:#eef1fa"></div>
<!-- table body -->
<div class="a" style="left:33px;top:581px;width:919px;height:227px;background:#f2f5fd;border-left:1px solid #dfe4f3;border-bottom:1px solid #8f9bb8"></div>
<!-- header -->
<div class="a" style="left:33px;top:580px;width:919px;height:1px;background:#8f98b3"></div><div class="a" style="left:36px;top:581px;width:897px;height:22px;background:#efeff2;border-bottom:1px solid #9a9a9a;border-top:1px solid #b9bccb"></div>
<div class="a" style="left:36px;top:582px;width:1px;height:20px;background:#a9a9b2"></div>
<div class="a" style="left:68px;top:582px;width:1px;height:20px;background:#a9a9b2"></div>
<div class="a" style="left:463px;top:582px;width:1px;height:20px;background:#a9a9b2"></div>
<div class="a" style="left:583px;top:582px;width:1px;height:20px;background:#a9a9b2"></div>
<div class="a" style="left:703px;top:582px;width:1px;height:20px;background:#a9a9b2"></div>
<div class="a" style="left:883px;top:582px;width:1px;height:20px;background:#a9a9b2"></div>
<div class="a" style="left:923px;top:582px;width:1px;height:20px;background:#a9a9b2"></div>
<div class="a" style="left:932px;top:582px;width:1px;height:20px;background:#a9a9b2"></div>
<div class="t" style="left:69px;top:584px;width:394px;text-align:center">Description</div>
<div class="t" style="left:464px;top:584px;width:119px;text-align:center">Project</div>
<div class="t" style="left:584px;top:584px;width:119px;text-align:center">Entity</div>
<div class="t" style="left:704px;top:584px;width:179px;text-align:center">File</div>
<div class="t" style="left:884px;top:584px;width:39px;text-align:center">Line</div>
<div class="row" style="top:603px"><svg class="a" style="left:8px;top:2px" width="15" height="15" viewBox="0 0 15 15"><circle cx="7.5" cy="7.5" r="6.6" fill="#fff" stroke="#5a7fcf" stroke-width="1.1"/><circle cx="7.5" cy="4.2" r="1.1" fill="#1c3fb8"/><path d="M6.2 6.5 H8.3 V11.6 M6 11.3 H9.2" fill="none" stroke="#1c3fb8" stroke-width="1.4"/></svg><div class="a" style="left:43px;top:5px;width:0;height:0;border-top:4px solid transparent;border-bottom:4px solid transparent;border-left:4.5px solid #1e1e1e"></div><div class="t" style="left:54.2px">in expansion of macro <span style="letter-spacing:-0.94px">‘_BUG_FLAGS’</span></div><div class="t" style="left:432.7px;letter-spacing:-0.309px">KernelTraceDemo</div><svg class="a" style="left:554.5px;top:2px" width="13" height="14" viewBox="0 0 14 15"><path d="M7 0.8 L13 4.1 V10.9 L7 14.2 L1 10.9 V4.1 Z" fill="#f4f4f4" stroke="#5a5a5a" stroke-width="1.1" stroke-linejoin="round"/><path d="M7 14.2 V7.5 M7 7.5 L1.4 4.3 M7 7.5 L12.6 4.3" fill="none" stroke="#5a5a5a" stroke-width="1.1"/></svg><div class="t mono" style="left:574px;width:87px;overflow:hidden">CharDevDemo_read</div><div class="t" style="left:672.9px;letter-spacing:0.194px">bug.h</div><div class="t" style="left:853px">82</div></div>
<div class="row" style="top:622px"><svg class="a" style="left:8px;top:2px" width="15" height="15" viewBox="0 0 15 15"><circle cx="7.5" cy="7.5" r="6.6" fill="#fff" stroke="#5a7fcf" stroke-width="1.1"/><circle cx="7.5" cy="4.2" r="1.1" fill="#1c3fb8"/><path d="M6.2 6.5 H8.3 V11.6 M6 11.3 H9.2" fill="none" stroke="#1c3fb8" stroke-width="1.4"/></svg><div class="a" style="left:43px;top:5px;width:0;height:0;border-top:4px solid transparent;border-bottom:4px solid transparent;border-left:4.5px solid #1e1e1e"></div><div class="t" style="left:54.2px">in expansion of macro <span style="letter-spacing:-0.81px">‘__WARN_FLAGS’</span></div><div class="t" style="left:432.7px;letter-spacing:-0.309px">KernelTraceDemo</div><svg class="a" style="left:554.5px;top:2px" width="13" height="14" viewBox="0 0 14 15"><path d="M7 0.8 L13 4.1 V10.9 L7 14.2 L1 10.9 V4.1 Z" fill="#f4f4f4" stroke="#5a5a5a" stroke-width="1.1" stroke-linejoin="round"/><path d="M7 14.2 V7.5 M7 7.5 L1.4 4.3 M7 7.5 L12.6 4.3" fill="none" stroke="#5a5a5a" stroke-width="1.1"/></svg><div class="t mono" style="left:574px;width:87px;overflow:hidden">CharDevDemo_read</div><div class="t" style="left:672.9px;letter-spacing:0.194px">bug.h</div><div class="t" style="left:853px">106</div></div>
<div class="row" style="top:641px"><svg class="a" style="left:8px;top:2px" width="15" height="15" viewBox="0 0 15 15"><circle cx="7.5" cy="7.5" r="6.6" fill="#fff" stroke="#5a7fcf" stroke-width="1.1"/><circle cx="7.5" cy="4.2" r="1.1" fill="#1c3fb8"/><path d="M6.2 6.5 H8.3 V11.6 M6 11.3 H9.2" fill="none" stroke="#1c3fb8" stroke-width="1.4"/></svg><div class="a" style="left:43px;top:5px;width:0;height:0;border-top:4px solid transparent;border-bottom:4px solid transparent;border-left:4.5px solid #1e1e1e"></div><div class="t" style="left:54.2px">in expansion of macro <span style="letter-spacing:-0.5px">‘WARN_ON_ONCE’</span></div><div class="t" style="left:432.7px;letter-spacing:-0.309px">KernelTraceDemo</div><svg class="a" style="left:554.5px;top:2px" width="13" height="14" viewBox="0 0 14 15"><path d="M7 0.8 L13 4.1 V10.9 L7 14.2 L1 10.9 V4.1 Z" fill="#f4f4f4" stroke="#5a5a5a" stroke-width="1.1" stroke-linejoin="round"/><path d="M7 14.2 V7.5 M7 7.5 L1.4 4.3 M7 7.5 L12.6 4.3" fill="none" stroke="#5a5a5a" stroke-width="1.1"/></svg><div class="t mono" style="left:574px;width:87px;overflow:hidden">CharDevDemo_read</div><div class="t" style="left:672.9px;letter-spacing:-0.020px">thread_info.h</div><div class="t" style="left:853px">216</div></div>
<div class="row sel" style="top:660px"><svg class="a" style="left:7px;top:1px" width="17" height="16" viewBox="0 0 17 16"><path d="M8.5 1 L16.3 14.8 H0.7 Z" fill="#f6d21c" stroke="#c9a30a" stroke-width="0.9" stroke-linejoin="round"/><path d="M8.5 5 V10" stroke="#1e1e1e" stroke-width="1.8"/><rect x="7.6" y="11.2" width="1.8" height="1.8" fill="#1e1e1e"/></svg><div class="a" style="left:43px;top:5px;width:0;height:0;border-top:4px solid transparent;border-bottom:4px solid transparent;border-left:4.5px solid #fff"></div><div class="t" style="left:54.6px;letter-spacing:-0.005px">‘asm’ operand 2 probably does not match constraints</div><div class="t" style="left:432.7px;letter-spacing:-0.309px">KernelTraceDemo</div><svg class="a" style="left:553px;top:1px" width="16" height="17" viewBox="-1 -1 16 17"><path d="M7 0.8 L13 4.1 V10.9 L7 14.2 L1 10.9 V4.1 Z" fill="#fff" stroke="#fff" stroke-width="3" stroke-linejoin="round"/><path d="M7 0.8 L13 4.1 V10.9 L7 14.2 L1 10.9 V4.1 Z" fill="#f4f4f4" stroke="#5a5a5a" stroke-width="1.1" stroke-linejoin="round"/><path d="M7 14.2 V7.5 M7 7.5 L1.4 4.3 M7 7.5 L12.6 4.3" fill="none" stroke="#5a5a5a" stroke-width="1.1"/></svg><div class="t mono" style="left:574px;width:87px;overflow:hidden">AllocateBasicCharacterDevice</div><div class="t" style="left:672.9px;letter-spacing:-0.070px">compiler_types.h</div><div class="t" style="left:853px">258</div></div>
<div class="row" style="top:679px"><svg class="a" style="left:8px;top:2px" width="15" height="15" viewBox="0 0 15 15"><circle cx="7.5" cy="7.5" r="6.6" fill="#fff" stroke="#5a7fcf" stroke-width="1.1"/><circle cx="7.5" cy="4.2" r="1.1" fill="#1c3fb8"/><path d="M6.2 6.5 H8.3 V11.6 M6 11.3 H9.2" fill="none" stroke="#1c3fb8" stroke-width="1.4"/></svg><div class="a" style="left:43px;top:5px;width:0;height:0;border-top:4px solid transparent;border-bottom:4px solid transparent;border-left:4.5px solid #1e1e1e"></div><div class="t" style="left:54.2px">in expansion of macro <span style="letter-spacing:-0.05px">‘asm_inline’</span></div><div class="t" style="left:432.7px;letter-spacing:-0.309px">KernelTraceDemo</div><svg class="a" style="left:554.5px;top:2px" width="13" height="14" viewBox="0 0 14 15"><path d="M7 0.8 L13 4.1 V10.9 L7 14.2 L1 10.9 V4.1 Z" fill="#f4f4f4" stroke="#5a5a5a" stroke-width="1.1" stroke-linejoin="round"/><path d="M7 14.2 V7.5 M7 7.5 L1.4 4.3 M7 7.5 L12.6 4.3" fill="none" stroke="#5a5a5a" stroke-width="1.1"/></svg><div class="t mono" style="left:574px;width:87px;overflow:hidden">AllocateBasicCharacterDevice</div><div class="t" style="left:672.9px;letter-spacing:0.194px">bug.h</div><div class="t" style="left:853px">27</div></div>
<div class="row" style="top:698px"><svg class="a" style="left:8px;top:2px" width="15" height="15" viewBox="0 0 15 15"><circle cx="7.5" cy="7.5" r="6.6" fill="#fff" stroke="#5a7fcf" stroke-width="1.1"/><circle cx="7.5" cy="4.2" r="1.1" fill="#1c3fb8"/><path d="M6.2 6.5 H8.3 V11.6 M6 11.3 H9.2" fill="none" stroke="#1c3fb8" stroke-width="1.4"/></svg><div class="a" style="left:43px;top:5px;width:0;height:0;border-top:4px solid transparent;border-bottom:4px solid transparent;border-left:4.5px solid #1e1e1e"></div><div class="t" style="left:54.2px">in expansion of macro <span style="letter-spacing:-0.94px">‘_BUG_FLAGS’</span></div><div class="t" style="left:432.7px;letter-spacing:-0.309px">KernelTraceDemo</div><svg class="a" style="left:554.5px;top:2px" width="13" height="14" viewBox="0 0 14 15"><path d="M7 0.8 L13 4.1 V10.9 L7 14.2 L1 10.9 V4.1 Z" fill="#f4f4f4" stroke="#5a5a5a" stroke-width="1.1" stroke-linejoin="round"/><path d="M7 14.2 V7.5 M7 7.5 L1.4 4.3 M7 7.5 L12.6 4.3" fill="none" stroke="#5a5a5a" stroke-width="1.1"/></svg><div class="t mono" style="left:574px;width:87px;overflow:hidden">AllocateBasicCharacterDevice</div><div class="t" style="left:672.9px;letter-spacing:0.194px">bug.h</div><div class="t" style="left:853px">82</div></div>
<div class="row" style="top:717px"><svg class="a" style="left:8px;top:2px" width="15" height="15" viewBox="0 0 15 15"><circle cx="7.5" cy="7.5" r="6.6" fill="#fff" stroke="#5a7fcf" stroke-width="1.1"/><circle cx="7.5" cy="4.2" r="1.1" fill="#1c3fb8"/><path d="M6.2 6.5 H8.3 V11.6 M6 11.3 H9.2" fill="none" stroke="#1c3fb8" stroke-width="1.4"/></svg><div class="a" style="left:43px;top:5px;width:0;height:0;border-top:4px solid transparent;border-bottom:4px solid transparent;border-left:4.5px solid #1e1e1e"></div><div class="t" style="left:54.2px">in expansion of macro <span style="letter-spacing:-0.81px">‘__WARN_FLAGS’</span></div><div class="t" style="left:432.7px;letter-spacing:-0.309px">KernelTraceDemo</div><svg class="a" style="left:554.5px;top:2px" width="13" height="14" viewBox="0 0 14 15"><path d="M7 0.8 L13 4.1 V10.9 L7 14.2 L1 10.9 V4.1 Z" fill="#f4f4f4" stroke="#5a5a5a" stroke-width="1.1" stroke-linejoin="round"/><path d="M7 14.2 V7.5 M7 7.5 L1.4 4.3 M7 7.5 L12.6 4.3" fill="none" stroke="#5a5a5a" stroke-width="1.1"/></svg><div class="t mono" style="left:574px;width:87px;overflow:hidden">AllocateBasicCharacterDevice</div><div class="t" style="left:672.9px;letter-spacing:0.194px">bug.h</div><div class="t" style="left:853px">96</div></div>
<div class="row" style="top:736px"><svg class="a" style="left:8px;top:2px" width="15" height="15" viewBox="0 0 15 15"><circle cx="7.5" cy="7.5" r="6.6" fill="#fff" stroke="#5a7fcf" stroke-width="1.1"/><circle cx="7.5" cy="4.2" r="1.1" fill="#1c3fb8"/><path d="M6.2 6.5 H8.3 V11.6 M6 11.3 H9.2" fill="none" stroke="#1c3fb8" stroke-width="1.4"/></svg><div class="a" style="left:43px;top:5px;width:0;height:0;border-top:4px solid transparent;border-bottom:4px solid transparent;border-left:4.5px solid #1e1e1e"></div><div class="t" style="left:54.2px">in expansion of macro <span style="letter-spacing:-0.46px">‘__WARN’</span></div><div class="t" style="left:432.7px;letter-spacing:-0.309px">KernelTraceDemo</div><svg class="a" style="left:554.5px;top:2px" width="13" height="14" viewBox="0 0 14 15"><path d="M7 0.8 L13 4.1 V10.9 L7 14.2 L1 10.9 V4.1 Z" fill="#f4f4f4" stroke="#5a5a5a" stroke-width="1.1" stroke-linejoin="round"/><path d="M7 14.2 V7.5 M7 7.5 L1.4 4.3 M7 7.5 L12.6 4.3" fill="none" stroke="#5a5a5a" stroke-width="1.1"/></svg><div class="t mono" style="left:574px;width:87px;overflow:hidden">AllocateBasicCharacterDevice</div><div class="t" style="left:672.9px;letter-spacing:0.194px">bug.h</div><div class="t" style="left:853px">123</div></div>
<div class="row" style="top:755px"><svg class="a" style="left:8px;top:2px" width="15" height="15" viewBox="0 0 15 15"><circle cx="7.5" cy="7.5" r="6.6" fill="#fff" stroke="#5a7fcf" stroke-width="1.1"/><circle cx="7.5" cy="4.2" r="1.1" fill="#1c3fb8"/><path d="M6.2 6.5 H8.3 V11.6 M6 11.3 H9.2" fill="none" stroke="#1c3fb8" stroke-width="1.4"/></svg><div class="a" style="left:43px;top:5px;width:0;height:0;border-top:4px solid transparent;border-bottom:4px solid transparent;border-left:4.5px solid #1e1e1e"></div><div class="t" style="left:54.2px">in expansion of macro <span style="letter-spacing:-0.21px">‘WARN_ON’</span></div><div class="t" style="left:432.7px;letter-spacing:-0.309px">KernelTraceDemo</div><svg class="a" style="left:554.5px;top:2px" width="13" height="14" viewBox="0 0 14 15"><path d="M7 0.8 L13 4.1 V10.9 L7 14.2 L1 10.9 V4.1 Z" fill="#f4f4f4" stroke="#5a5a5a" stroke-width="1.1" stroke-linejoin="round"/><path d="M7 14.2 V7.5 M7 7.5 L1.4 4.3 M7 7.5 L12.6 4.3" fill="none" stroke="#5a5a5a" stroke-width="1.1"/></svg><div class="t mono" style="left:574px;width:87px;overflow:hidden">AllocateBasicCharacterDevice</div><div class="t" style="left:673.0px;letter-spacing:-0.275px">BasicCharacterDevice.c</div><div class="t" style="left:853px">97</div></div>
<div class="row" style="top:774px"><svg class="a" style="left:8px;top:2px" width="15" height="15" viewBox="0 0 15 15"><circle cx="7.5" cy="7.5" r="7" fill="#e01b1e"/><path d="M4.6 4.6 L10.4 10.4 M10.4 4.6 L4.6 10.4" stroke="#fff" stroke-width="2"/></svg><div class="t" style="left:37.6px;letter-spacing:0.150px">Command-line action failed</div><div class="t" style="left:432.7px;letter-spacing:-0.309px">KernelTraceDemo</div></div>

<!-- scrollbar -->
<div class="a" style="left:933px;top:581px;width:19px;height:226px;background:#e8e8ec"></div>
<div class="a" style="left:938px;top:587px;width:0;height:0;border-left:4.5px solid transparent;border-right:4.5px solid transparent;border-bottom:5px solid #868999"></div>
<div class="a" style="left:938px;top:796px;width:0;height:0;border-left:4.5px solid transparent;border-right:4.5px solid transparent;border-top:5px solid #868999"></div>
<div class="a" style="left:938px;top:730px;width:9px;height:60px;background:#c2c3c9"></div>
<!-- message strip -->
<div class="a" style="left:33px;top:808px;width:919px;height:26px;background:#c9d4e9"></div>
<svg class="a" style="left:39px;top:815px" width="14" height="13" viewBox="0 0 14 13"><path d="M1 1 L13 12 M13 1 L1 12" stroke="#e8321c" stroke-width="1.6"/></svg>
<div class="t" style="left:59.0px;top:814px;letter-spacing:-0.151px">Successfully built 0 projectss, 1 projects failed, 1 projects in 00:01.</div>
<div class="t" style="left:411.4px;top:814px;color:#0e70c0;letter-spacing:-0.169px">View Detailed Log.</div>
<!-- tabs -->
<div class="a" style="left:33px;top:834px;width:56px;height:19px;background:#40508d"></div>
<div class="t" style="left:38.0px;top:836px;color:#e8ecf8;letter-spacing:-0.239px">Error List</div>
<div class="a" style="left:91px;top:834px;width:122px;height:19px;background:#40508d"></div>
<div class="t" style="left:95.9px;top:836px;color:#e8ecf8;letter-spacing:-0.210px">Code Explorer Details</div>
<div class="a" style="left:215px;top:833px;width:104px;height:21px;background:#f5f7fd"></div>
<div class="t" style="left:219.9px;top:836px;color:#1e1e1e;letter-spacing:-0.176px">VisualKernel Build</div>
<div class="a" style="left:321px;top:834px;width:47px;height:19px;background:#40508d"></div>
<div class="t" style="left:326.3px;top:836px;color:#e8ecf8;letter-spacing:0.345px">Output</div>
<!-- BUILD-END -->
<!-- ===== SOLUTION EXPLORER ===== -->
<div class="a" style="left:960px;top:74px;width:294px;height:21px;background:#40508d"></div>
<div class="t" style="left:964.4px;top:77px;color:#fff;letter-spacing:-0.094px">Solution Explorer</div>
<div class="arr" style="left:1206px;top:82px;border-left-width:4px;border-right-width:4px;border-top-width:4.5px;border-top-color:#b9c3e2"></div>
<svg class="a" style="left:1221px;top:78px" width="11" height="13" viewBox="0 0 11 13"><path d="M3.5 1 H8 V7 M3.5 1 V7 M6.8 1 V7 M1.5 7.5 H9.5 M5.5 7.5 V12.5" fill="none" stroke="#b9c3e2" stroke-width="1.1"/></svg>
<svg class="a" style="left:1237px;top:79px" width="11" height="11" viewBox="0 0 11 11"><path d="M1 1 L10 10 M10 1 L1 10" stroke="#b9c3e2" stroke-width="1.3"/></svg>
<div class="a" style="left:960px;top:95px;width:294px;height:29px;background:#ccd5f0"></div>
<!-- SE toolbar icons -->
<svg class="a" style="left:968px;top:102px" width="13" height="13" viewBox="0 0 13 13"><circle cx="6.5" cy="6.5" r="5.8" fill="none" stroke="#a9b0c8" stroke-width="1"/><path d="M9.5 6.5 H3.8 M6 4.2 L3.7 6.5 L6 8.8" fill="none" stroke="#a9b0c8" stroke-width="1"/></svg>
<svg class="a" style="left:990px;top:102px" width="13" height="13" viewBox="0 0 13 13"><circle cx="6.5" cy="6.5" r="5.8" fill="none" stroke="#a9b0c8" stroke-width="1"/><path d="M3.5 6.5 H9.2 M7 4.2 L9.3 6.5 L7 8.8" fill="none" stroke="#a9b0c8" stroke-width="1"/></svg>
<svg class="a" style="left:1011px;top:101px" width="16" height="15" viewBox="0 0 16 15"><path d="M1 8 L8 1.5 L15 8 M3 7 V14 H6.5 V9.5 H9.5 V14 H13 V7" fill="none" stroke="#333" stroke-width="1.2"/></svg>
<svg class="a" style="left:1032px;top:101px" width="17" height="16" viewBox="0 0 17 16"><path d="M7 1 H15.5 V11 H11" fill="#f4f6fc" stroke="#333" stroke-width="1"/><path d="M9 3.5 H13.5 M9 5.5 H13.5 M9 7.5 H13.5" stroke="#333" stroke-width="0.9"/><path d="M7 6 L9.5 7 V14 L7 15 L3.5 11.8 L1.8 13.2 L1 12.7 V8.3 L1.8 7.8 L3.5 9.2 Z M7 9 L5 10.5 L7 12 Z" fill="#6c2bb5" fill-rule="evenodd"/></svg>
<div class="sep" style="left:1055px;top:99px;height:20px"></div>
<svg class="a" style="left:1063px;top:100px" width="17" height="17" viewBox="0 0 17 17"><path d="M0.5 1 H5.5 L3.6 3.5 V6 H2.4 V3.5 Z" fill="#1a5fb4"/><circle cx="10" cy="10.5" r="5.2" fill="none" stroke="#333" stroke-width="1.2"/><path d="M10 7.2 V10.8 H12.8" fill="none" stroke="#333" stroke-width="1.1"/></svg>
<div class="arr" style="left:1085px;top:107px"></div>
<svg class="a" style="left:1098px;top:102px" width="16" height="13" viewBox="0 0 16 13"><path d="M1 4 H14 M11 1 L14 4 M15 9 H2 M5 12 L2 9" fill="none" stroke="#333" stroke-width="1.2"/></svg>
<svg class="a" style="left:1120px;top:101px" width="16" height="15" viewBox="0 0 16 15"><path d="M4 3 V1 H15 V11 H13" fill="none" stroke="#333" stroke-width="1.1"/><rect x="1" y="3.5" width="11.5" height="10.5" fill="none" stroke="#333" stroke-width="1.2"/><path d="M3.8 8.8 H9.8" stroke="#333" stroke-width="1.2"/></svg>
<div class="sep" style="left:1142px;top:99px;height:20px"></div>
<svg class="a" style="left:1150px;top:101px" width="16" height="16" viewBox="0 0 16 16"><path d="M1.5 14.5 L8.5 7.5" stroke="#333" stroke-width="2.2" stroke-linecap="round"/><path d="M8 8 C6.5 5.5 8.5 1.5 12.5 2 L10.5 4.5 L12 6 L14.5 4 C15 8 11.5 10 9 9 Z" fill="#333"/></svg>
<svg class="a" style="left:1171px;top:102px" width="18" height="13" viewBox="0 0 18 13"><rect x="0.8" y="8" width="11" height="3.5" fill="none" stroke="#333" stroke-width="1.1"/><path d="M9 8 V5.5 H12.5" fill="none" stroke="#333" stroke-width="1.1"/><path d="M14 4.5 L16 2.5 M15 7 H17 M12.5 3 V1" stroke="#d4881c" stroke-width="1.1"/></svg>
<!-- search -->
<div class="a" style="left:960px;top:124px;width:294px;height:20px;background:#fff;border:1px solid #98a3c2"></div>
<div class="t" style="left:964.9px;top:126px;color:#5a5f72;letter-spacing:-0.139px">Search Solution Explorer (Ctrl+;)</div>
<svg class="a" style="left:1226px;top:126px" width="14" height="14" viewBox="0 0 14 14"><circle cx="8.5" cy="5.2" r="3.4" fill="none" stroke="#555" stroke-width="1.5"/><path d="M6 7.8 L1.8 12" stroke="#555" stroke-width="1.9" stroke-linecap="round"/></svg>
<div class="a" style="left:1241px;top:125px;width:1px;height:18px;background:#c5cbe0"></div>
<div class="arr" style="left:1244px;top:133px;border-left-width:3px;border-right-width:3px;border-top-width:3.5px"></div>
<!-- tree body -->
<div id="se" class="a" style="left:960px;top:144px;width:294px;height:690px;background:#f5f7fd">
<div class="se" style="top:2px"><svg class="a" style="left:14px;top:2px" width="16" height="16" viewBox="0 0 16 16"><path d="M1.3 1.3 H14.3 V7.5 H5 V13 H1.3 Z" fill="#e8e9ee"/><path d="M4.5 13.2 H1.3 V1.3 H14.4 V6" fill="none" stroke="#222" stroke-width="1.1"/><path d="M1.3 3.8 H14.4" stroke="#222" stroke-width="1.1"/><g transform="translate(5.3 5.6) scale(0.5)"><path d="M14.4 0 L20 3.6 V16.1 L14.4 20 L8.5 13.6 L4.2 17 L0 14 V5.9 L4.2 3 L8.5 6.3 Z M15.1 7.1 L12 10 L15.1 12.9 Z M2.9 8 L5.1 10 L2.9 12 Z" fill="#7b3fc6" fill-rule="evenodd"/></g></svg><div class="t" style="left:35.0px;letter-spacing:-0.112px">Solution 'KernelTraceDemo' (2 of 2 projects)</div></div>
<div class="se" style="top:21px"><svg class="a" style="left:10.6px;top:4px" width="7" height="11" viewBox="0 0 7 11"><path d="M0.8 1.2 L5.3 5.5 L0.8 9.8 Z" fill="none" stroke="#1e1e1e" stroke-width="1.15"/></svg><svg class="a" style="left:33px;top:2px" width="14" height="16" viewBox="0 0 14 16"><path d="M7 0.3 C5.6 0.3 5 1.6 5 3.2 C5 6 2.4 8.6 1.8 12.6 L12.2 12.6 C11.6 8.6 9 6 9 3.2 C9 1.6 8.4 0.3 7 0.3 Z" fill="#1e1e1e"/><ellipse cx="7" cy="9.6" rx="2.7" ry="3.7" fill="#e9e9e2"/><path d="M6 7.5 H8.2 L7 9.3 H8.6 L6.2 12 L6.8 10 H5.6 Z" fill="#d9c21c"/><ellipse cx="7" cy="4" rx="1.5" ry="0.9" fill="#f2a81a"/><ellipse cx="2.7" cy="13.8" rx="2.7" ry="1.7" fill="#f7b21a"/><ellipse cx="11.3" cy="13.8" rx="2.7" ry="1.7" fill="#f7b21a"/><rect x="5" y="13.6" width="4" height="1.2" fill="#1e1e1e"/></svg><div class="t" style="left:53.7px;letter-spacing:-0.210px">5.15.0-47-generic</div></div>
<div class="se" style="top:40px"><svg class="a" style="left:10.6px;top:6px" width="7" height="7" viewBox="0 0 7 7"><path d="M6.6 0.4 V6.6 H0.4 Z" fill="#1e1e1e"/></svg><svg class="a" style="left:33px;top:2px" width="14" height="16" viewBox="0 0 14 16"><path d="M7 0.3 C5.6 0.3 5 1.6 5 3.2 C5 6 2.4 8.6 1.8 12.6 L12.2 12.6 C11.6 8.6 9 6 9 3.2 C9 1.6 8.4 0.3 7 0.3 Z" fill="#1e1e1e"/><ellipse cx="7" cy="9.6" rx="2.7" ry="3.7" fill="#e9e9e2"/><path d="M6 7.5 H8.2 L7 9.3 H8.6 L6.2 12 L6.8 10 H5.6 Z" fill="#d9c21c"/><ellipse cx="7" cy="4" rx="1.5" ry="0.9" fill="#f2a81a"/><ellipse cx="2.7" cy="13.8" rx="2.7" ry="1.7" fill="#f7b21a"/><ellipse cx="11.3" cy="13.8" rx="2.7" ry="1.7" fill="#f7b21a"/><rect x="5" y="13.6" width="4" height="1.2" fill="#1e1e1e"/></svg><div class="t" style="left:53.7px;font-weight:bold;letter-spacing:-0.103px">KernelTraceDemo</div></div>
<div class="se" style="top:59px"><svg class="a" style="left:28.7px;top:4px" width="7" height="11" viewBox="0 0 7 11"><path d="M0.8 1.2 L5.3 5.5 L0.8 9.8 Z" fill="none" stroke="#1e1e1e" stroke-width="1.15"/></svg><svg class="a" style="left:50px;top:5px" width="16" height="9" viewBox="0 0 16 9"><rect x="1" y="2.3" width="3.9" height="4.6" fill="#444"/><rect x="9.2" y="1.1" width="5.9" height="6.8" fill="#3a3a3a"/><path d="M6 4.6 H7.6" stroke="#444" stroke-width="1"/></svg><div class="t" style="left:71.2px;letter-spacing:-0.315px">Referenced Kernel</div></div>
<div class="se" style="top:78px"><svg class="a" style="left:28.6px;top:6px" width="7" height="7" viewBox="0 0 7 7"><path d="M6.6 0.4 V6.6 H0.4 Z" fill="#1e1e1e"/></svg><svg class="a" style="left:50px;top:4px" width="16" height="14" viewBox="0 0 16 14"><path d="M2.2 11.5 V3.8 H5.5 L6.5 1.4 H14.7 V11.5" fill="#ebeefb" stroke="#dcb67a" stroke-width="1"/><path d="M5 11.9 L7.5 7.5 H11 L14.5 11.9 Z" fill="#dcb67a"/><path d="M0.8 8.6 H6.2 L4 10.8 V12.9 H3 V10.8 Z" fill="#333" stroke="#f5f7fd" stroke-width="0.5"/></svg><div class="t" style="left:71.2px;letter-spacing:-0.384px">Source Files</div></div>
<div class="se" style="top:97px;background:#e6e7ee"><svg class="a" style="left:69px;top:5px" width="14" height="10" viewBox="0 0 14 10"><path d="M3.6 1 V6.6 M0.8 3.8 H6.4 M9.4 3.6 V9 M6.7 6.3 H12.2" stroke="#8b3a96" stroke-width="1.9"/></svg><div class="t" style="left:89.3px;letter-spacing:-0.293px">BasicCharacterDevice.c</div></div>
<div class="se" style="top:116px"><svg class="a" style="left:69px;top:5px" width="14" height="10" viewBox="0 0 14 10"><path d="M3.6 1 V6.6 M0.8 3.8 H6.4 M9.4 3.6 V9 M6.7 6.3 H12.2" stroke="#8b3a96" stroke-width="1.9"/></svg><div class="t" style="left:89.3px;letter-spacing:-0.293px">KernelTraceDemo_main.c</div></div>
<div class="se" style="top:135px"><svg class="a" style="left:28.7px;top:4px" width="7" height="11" viewBox="0 0 7 11"><path d="M0.8 1.2 L5.3 5.5 L0.8 9.8 Z" fill="none" stroke="#1e1e1e" stroke-width="1.15"/></svg><svg class="a" style="left:50px;top:4px" width="16" height="14" viewBox="0 0 16 14"><path d="M2 3.5 H6 L7 1 H15.1 V11.9 H2 Z" fill="#dcb67a"/><path d="M8 2.2 H14" stroke="#f7efe0" stroke-width="0.9"/><path d="M0.8 8.6 H6.2 L4 10.8 V12.9 H3 V10.8 Z" fill="#333" stroke="#f5f7fd" stroke-width="0.5"/></svg><div class="t" style="left:71.2px;letter-spacing:-0.344px">Header Files</div></div>
<div class="se" style="top:154px"><svg class="a" style="left:28.7px;top:4px" width="7" height="11" viewBox="0 0 7 11"><path d="M0.8 1.2 L5.3 5.5 L0.8 9.8 Z" fill="none" stroke="#1e1e1e" stroke-width="1.15"/></svg><svg class="a" style="left:50px;top:4px" width="16" height="14" viewBox="0 0 16 14"><path d="M2 3.5 H6 L7 1 H15.1 V11.9 H2 Z" fill="#dcb67a"/><path d="M8 2.2 H14" stroke="#f7efe0" stroke-width="0.9"/><path d="M0.8 8.6 H6.2 L4 10.8 V12.9 H3 V10.8 Z" fill="#333" stroke="#f5f7fd" stroke-width="0.5"/></svg><div class="t" style="left:71.2px;letter-spacing:-0.088px">Makefiles</div></div>
</div>
<!-- SE tabs -->
<div class="a" style="left:960px;top:833px;width:76px;height:21px;background:#f5f7fd"></div>
<div class="t" style="left:964.8px;top:836px;color:#1e1e1e;letter-spacing:-0.217px">Solution E...</div>
<div class="a" style="left:1037px;top:834px;width:77px;height:19px;background:#40508d"></div>
<div class="t" style="left:1043.0px;top:836px;color:#e8ecf8;letter-spacing:-0.298px">Code Expl...</div>
<div class="a" style="left:1115px;top:834px;width:63px;height:19px;background:#40508d"></div>
<div class="t" style="left:1120.0px;top:836px;color:#e8ecf8;letter-spacing:-0.160px">Properties</div>
<div class="a" style="left:1180px;top:834px;width:74px;height:19px;background:#40508d"></div>
<div class="t" style="left:1184.6px;top:836px;color:#e8ecf8;letter-spacing:-0.191px">Git Changes</div>
<!-- right strip -->
<div class="a" style="left:1280px;top:73px;width:6px;height:68px;background:#3d5189"></div>
<div class="t" style="left:1277px;top:73.5px;color:#fff;transform-origin:0 0;transform:rotate(90deg);letter-spacing:0.2px">Notifications</div>
<!-- SOLEXP-END -->
<!-- ===== STATUS BAR ===== -->
<div class="a" style="left:0;top:861px;width:1287px;height:24px;background:#40508d"></div>
<svg class="a" style="left:4px;top:864px" width="18" height="18" viewBox="0 0 18 18"><path d="M1.6 1.6 H16.4 V13.4 H11.5 L9 16 L6.5 13.4 H1.6 Z" fill="#54629c" stroke="#fff" stroke-width="1.2"/></svg>
<div class="t" style="left:28.6px;top:865px;color:#fff;letter-spacing:-0.378px">Ready</div>
<svg class="a" style="left:914px;top:865px" width="13" height="15" viewBox="0 0 13 15"><path d="M6.5 14.5 V1.5 M1.5 6.5 L6.5 1.5 L11.5 6.5" fill="none" stroke="#fff" stroke-width="1.2"/></svg>
<div class="t" style="left:934.8px;top:865px;color:#fff;letter-spacing:0.039px">Add to Source Control</div>
<div class="a" style="left:1059px;top:870px;width:0;height:0;border-left:4px solid transparent;border-right:4px solid transparent;border-bottom:5px solid #fff"></div>
<svg class="a" style="left:1089px;top:865px" width="16" height="16" viewBox="0 0 16 16"><path d="M8 0.5 L15.5 8 L8 15.5 L0.5 8 Z" fill="#fff"/><circle cx="6.5" cy="5" r="1.3" fill="#40508d"/><circle cx="6.5" cy="11" r="1.3" fill="#40508d"/><circle cx="10.3" cy="8" r="1.3" fill="#40508d"/><path d="M6.5 5 V11 M6.5 5.5 L10 8" stroke="#40508d" stroke-width="1" fill="none"/></svg>
<div class="t" style="left:1110.6px;top:865px;color:#fff;letter-spacing:-0.209px">Select Repository</div>
<div class="a" style="left:1207px;top:870px;width:0;height:0;border-left:4px solid transparent;border-right:4px solid transparent;border-bottom:5px solid #fff"></div>
<svg class="a" style="left:1235px;top:864px" width="15" height="17" viewBox="0 0 15 17"><path d="M1.5 12.5 C3.5 11 3 8 3.3 5.5 C3.6 3 5.3 1.5 7.5 1.5 C9.7 1.5 11.4 3 11.7 5.5 C12 8 11.5 11 13.5 12.5 Z" fill="none" stroke="#fff" stroke-width="1.2" stroke-linejoin="round"/><path d="M5.5 14.5 C6 16 9 16 9.5 14.5" fill="none" stroke="#fff" stroke-width="1.2"/></svg>
<svg class="a" style="left:1275px;top:873px" width="10" height="10" viewBox="0 0 10 10"><g fill="#7e8ab8"><rect x="8" y="0" width="1.5" height="1.5"/><rect x="5" y="3" width="1.5" height="1.5"/><rect x="8" y="3" width="1.5" height="1.5"/><rect x="2" y="6" width="1.5" height="1.5"/><rect x="5" y="6" width="1.5" height="1.5"/><rect x="8" y="6" width="1.5" height="1.5"/></g></svg>
<!-- window border -->
<div class="a" style="left:1px;top:1px;width:1285px;height:66px;border-top:1px solid #dbe3f9;border-right:1px solid #dbe3f9;border-radius:7px 7px 0 0;pointer-events:none"></div><div class="a" style="left:0;top:0;width:1287px;height:885px;border:1px solid #12306f;border-radius:8px;pointer-events:none"></div>
<!-- STATUS-END -->
</div>
</body>
</html>
